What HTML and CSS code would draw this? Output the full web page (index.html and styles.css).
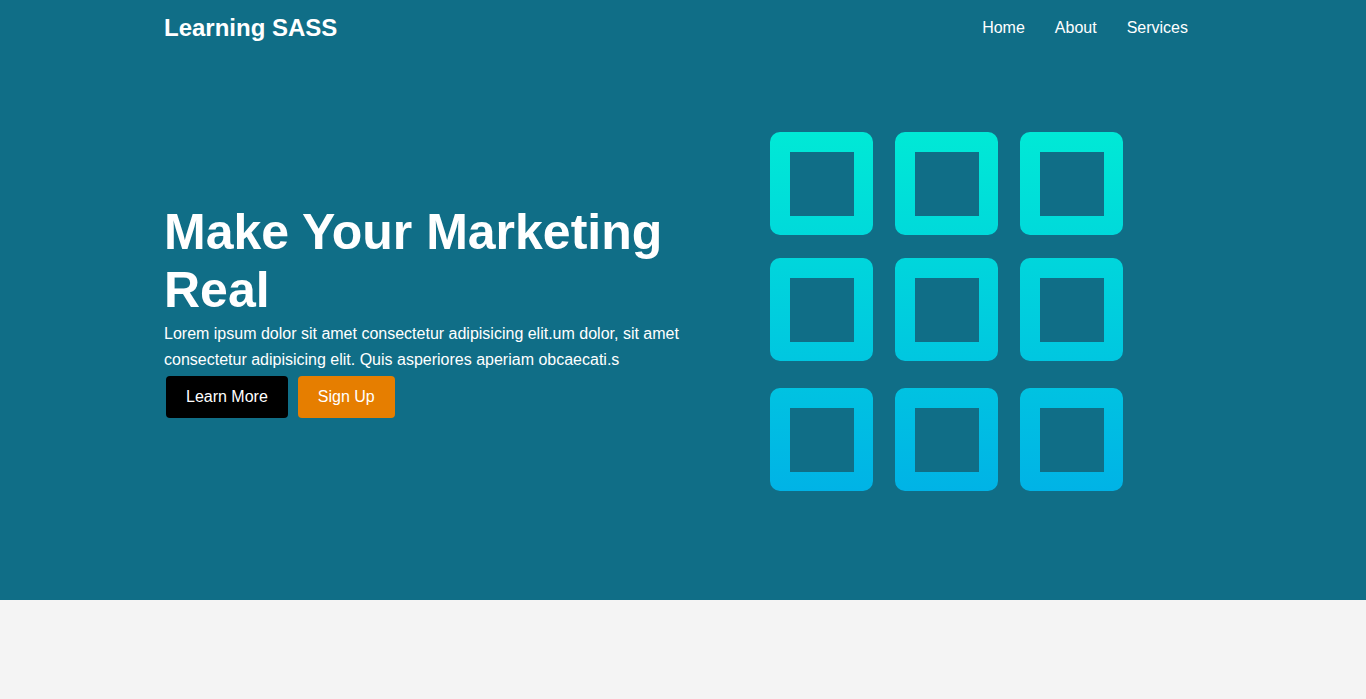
FILE: index.html
```html
<!DOCTYPE html>
<html lang="en">
<head>
<meta charset="utf-8">
<title>Learning SASS</title>
<link rel="stylesheet" href="styles.css">
</head>
<body>
<section class="hero">
  <header class="container navbar">
    <div class="logo">Learning SASS</div>
    <nav class="nav">
      <a href="#">Home</a>
      <a href="#">About</a>
      <a href="#">Services</a>
    </nav>
  </header>
  <div class="container showcase">
    <div class="showcase-text">
      <h1>Make Your Marketing Real</h1>
      <p>Lorem ipsum dolor sit amet consectetur adipisicing elit.um dolor, sit amet consectetur adipisicing elit. Quis asperiores aperiam obcaecati.s</p>
      <div class="actions">
        <a href="#" class="btn btn-dark">Learn More</a>
        <a href="#" class="btn btn-orange">Sign Up</a>
      </div>
    </div>
    <div class="showcase-img">
      <svg width="353" height="359" viewBox="0 0 353 359" xmlns="http://www.w3.org/2000/svg">
        <defs>
          <linearGradient id="g" x1="0" y1="0" x2="0" y2="359" gradientUnits="userSpaceOnUse">
            <stop offset="0" stop-color="#00e9d6"/>
            <stop offset="1" stop-color="#00b3e6"/>
          </linearGradient>
          <path id="sq" d="M10 0h83a10 10 0 0 1 10 10v83a10 10 0 0 1-10 10H10A10 10 0 0 1 0 93V10A10 10 0 0 1 10 0zM20 20v64h64V20z"/>
          <clipPath id="c">
            <use href="#sq" clip-rule="evenodd"/>
            <use href="#sq" clip-rule="evenodd" transform="translate(125 0)"/>
            <use href="#sq" clip-rule="evenodd" transform="translate(250 0)"/>
            <use href="#sq" clip-rule="evenodd" transform="translate(0 126)"/>
            <use href="#sq" clip-rule="evenodd" transform="translate(125 126)"/>
            <use href="#sq" clip-rule="evenodd" transform="translate(250 126)"/>
            <use href="#sq" clip-rule="evenodd" transform="translate(0 256)"/>
            <use href="#sq" clip-rule="evenodd" transform="translate(125 256)"/>
            <use href="#sq" clip-rule="evenodd" transform="translate(250 256)"/>
          </clipPath>
        </defs>
        <rect x="0" y="0" width="353" height="359" fill="url(#g)" clip-path="url(#c)"/>
      </svg>
    </div>
  </div>
</section>
<section class="below"></section>
</body>
</html>
```

FILE: styles.css
```css
* {
  box-sizing: border-box;
  margin: 0;
  padding: 0;
}

body {
  font-family: "Liberation Sans", Arial, sans-serif;
  background: #f4f4f4;
  color: #333;
  line-height: 1.6;
}

a {
  text-decoration: none;
}

.container {
  width: 1038px;
  margin: 0 auto;
  padding-right: 14px;
}

.hero {
  background: #106e87;
  color: #fff;
  height: 600px;
}

.navbar {
  display: flex;
  justify-content: space-between;
  align-items: center;
  height: 56px;
}

.logo {
  font-size: 24px;
  font-weight: bold;
}

.nav {
  display: flex;
  gap: 30px;
}

.nav a {
  color: #fff;
  font-size: 16px;
}

.showcase {
  display: flex;
  align-items: center;
  height: 510px;
}

.showcase-text {
  width: 540px;
}

.showcase-text h1 {
  font-size: 50px;
  line-height: 1.15;
  font-weight: bold;
  margin-bottom: 2px;
}

.showcase-text p {
  font-size: 16px;
  line-height: 26px;
}

.actions {
  display: flex;
  gap: 10px;
  margin-top: 3px;
  margin-left: 2px;
}

.btn {
  display: inline-block;
  font-size: 16px;
  line-height: 18px;
  padding: 12px 20px;
  border-radius: 4px;
  color: #fff;
}

.btn-dark {
  background: #000;
}

.btn-orange {
  background: #e67e00;
}

.showcase-img {
  margin-left: 66px;
  display: flex;
}

.showcase-img svg {
  display: block;
}

.below {
  height: 99px;
}
```
